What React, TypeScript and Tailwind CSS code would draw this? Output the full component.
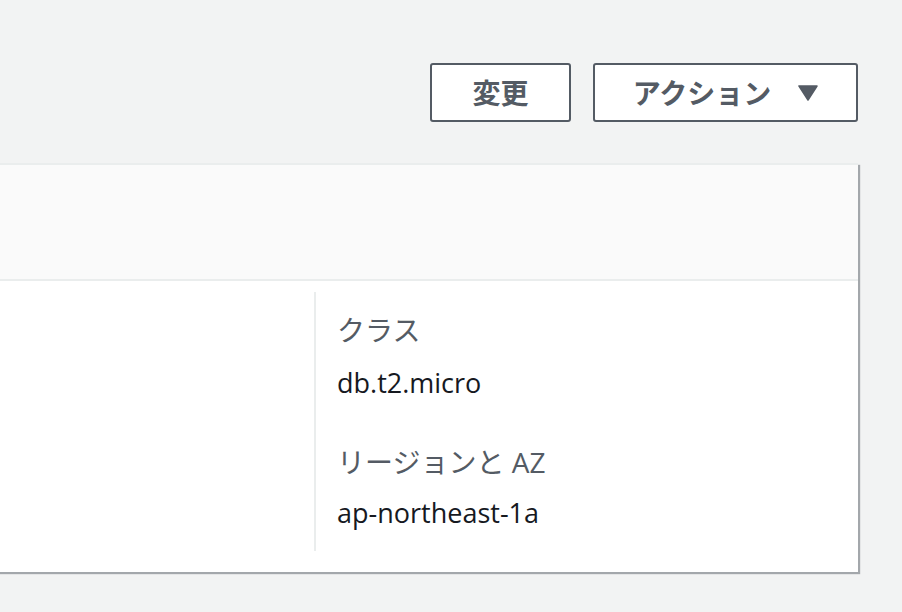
import React from "react";

export default function App() {
  const font = {
    fontFamily: '"Open Sans", "Noto Sans CJK JP", sans-serif',
  };
  return (
    <div
      className="w-[902px] h-[612px] bg-[#f2f3f3] overflow-hidden flex flex-col"
      style={font}
    >
      <div className="flex justify-end gap-[22px] pt-[63px] pr-[44px]">
        <button className="w-[141px] h-[59px] border-2 border-[#545b64] rounded-[3px] bg-white text-[#545b64] text-[28px] font-bold flex items-center justify-center">
          変更
        </button>
        <button className="w-[265px] h-[59px] border-2 border-[#545b64] rounded-[3px] bg-white text-[#545b64] text-[28px] font-bold flex items-center justify-center gap-[27px]">
          <span>アクション</span>
          <svg width="20" height="16" viewBox="0 0 20 16">
            <path d="M1 1 H19 L10 15 Z" fill="#545b64" stroke="#545b64" strokeWidth="1.5" strokeLinejoin="round" />
          </svg>
        </button>
      </div>
      <div className="mt-[41px] ml-[-2px] w-[860px] bg-white border-t-2 border-[#eaeded] shadow-[2px_2px_1px_rgba(84,91,100,0.5)]">
        <div className="h-[116px] bg-[#fafafa] border-b-2 border-[#eaeded]" />
        <div className="flex pt-[11px] pb-[21px]">
          <div className="w-[316px]" />
          <div className="w-[2px] bg-[#eaeded]" />
          <div className="flex flex-col pl-[21px] pt-[20px] pb-[20px] leading-[36px]">
            <div className="text-[#545b64] text-[28px]">クラス</div>
            <div className="text-[#16191f] text-[27px] mt-[17px]">db.t2.micro</div>
            <div className="text-[#545b64] text-[28px] mt-[43px]">リージョンと AZ</div>
            <div className="text-[#16191f] text-[27px] mt-[15px]">ap-northeast-1a</div>
          </div>
        </div>
      </div>
    </div>
  );
}
